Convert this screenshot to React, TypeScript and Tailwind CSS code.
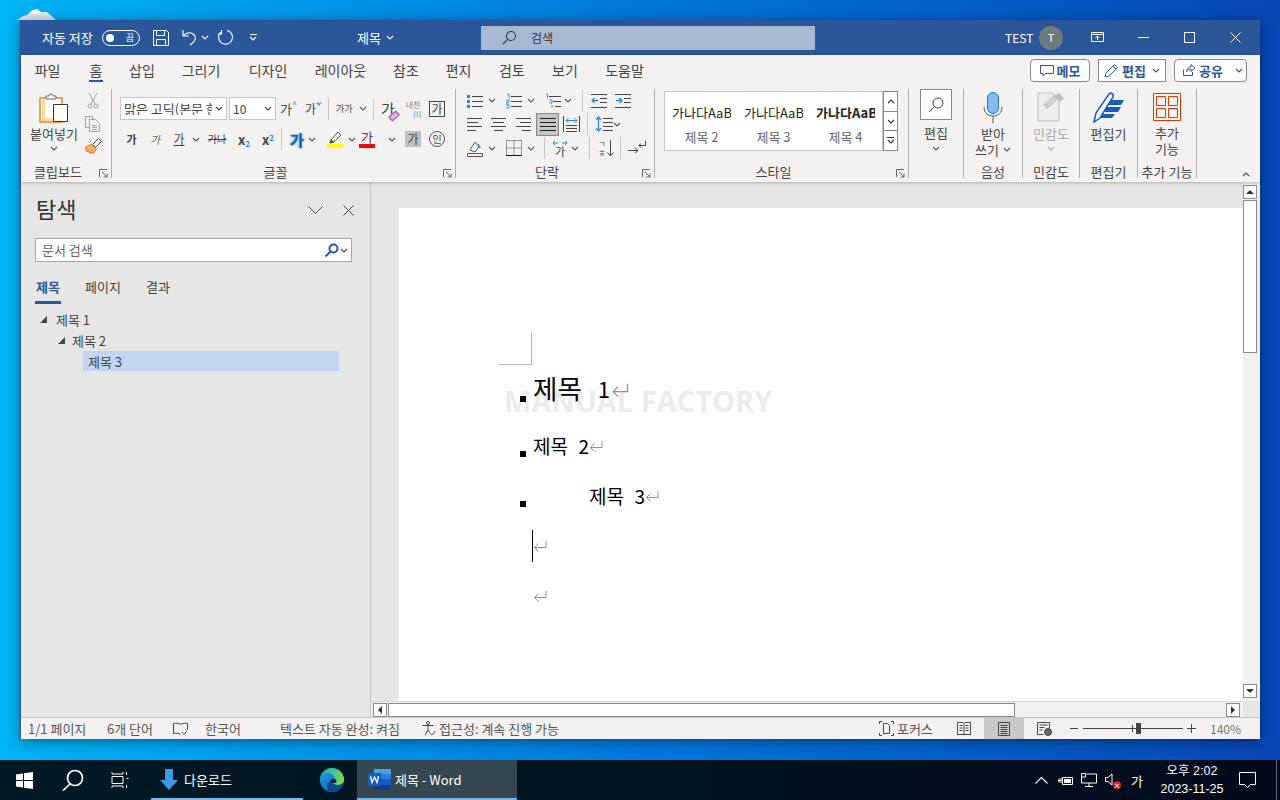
import type { ReactNode } from "react"

function Chev({ className = "", up = false }: { className?: string; up?: boolean }) {
    return (
        <svg width="8" height="5" viewBox="0 0 8 5" className={`shrink-0 ${className}`} fill="none" stroke="currentColor" strokeWidth="1.1">
            <path d={up ? "M1 4l3-3 3 3" : "M1 1l3 3 3-3"} />
        </svg>
    )
}

function ChevCell({ className = "" }: { className?: string }) {
    return (
        <div className={`w-[10px] flex justify-center text-[#555] ${className}`}>
            <Chev />
        </div>
    )
}

function Lines({ className = "", d }: { className?: string; d: string }) {
    return (
        <svg width="16" height="16" viewBox="0 0 16 16" className={`shrink-0 ${className}`} fill="none" stroke="#444" strokeWidth="1">
            <path d={d} />
        </svg>
    )
}

function Launcher() {
    return (
        <svg width="9" height="9" viewBox="0 0 9 9" fill="none" stroke="#666" strokeWidth="1">
            <path d="M.5 8V.5H8M3 3l5 5M8 4.5V8H4.5" />
        </svg>
    )
}

function Group({ width, label, launcher, children }: { width: string; label: string; launcher?: boolean; children: ReactNode }) {
    return (
        <div className={`${width} shrink-0 h-[89px] border-r border-[#b0aeac] flex flex-col`}>
            <div className="h-[76px] shrink-0">{children}</div>
            <div className={`relative h-[13px] flex items-center justify-center text-[13px] leading-none text-[#444] whitespace-nowrap ${launcher ? "pr-[16px]" : ""}`}>
                {label}
                {launcher && (
                    <div className="absolute right-[3px] bottom-0">
                        <Launcher />
                    </div>
                )}
            </div>
        </div>
    )
}

function Sep({ className = "", h = "h-[22px]" }: { className?: string; h?: string }) {
    return <div className={`w-px shrink-0 bg-[#c8c6c4] ${h} ${className}`} />
}

function TitleBar() {
    return (
        <div className="h-[35px] shrink-0 bg-[#2b579a] text-white flex items-center pl-[21px] relative">
            <div className="w-[52px] text-[13px] leading-none whitespace-nowrap">자동 저장</div>
            <div className="ml-[8px] w-[38px] h-[16px] rounded-full border border-white flex items-center justify-between pl-[3px] pr-[5px]">
                <div className="w-[8px] h-[8px] rounded-full bg-white" />
                <span className="text-[9px] leading-none">끔</span>
            </div>
            <svg width="16" height="16" viewBox="0 0 16 16" className="ml-[13px]" fill="none" stroke="#fff" strokeWidth="1">
                <path d="M.5.5h13l2 2v13H.5zM3.5.5v5h8v-5M3.5 15.5v-6h9v6" />
            </svg>
            <svg width="16" height="17" viewBox="0 0 16 17" className="ml-[13px]" fill="none" stroke="#fff" strokeWidth="1.1">
                <path d="M1 1v6h6M1 7c3-3 7-4 10-2 4 3 3 7-3 11" />
            </svg>
            <Chev className="ml-[3px] text-white" />
            <svg width="17" height="17" viewBox="0 0 17 17" className="ml-[8px]" fill="none" stroke="#fff" strokeWidth="1.1">
                <path d="M5 2.2a7 7 0 1 0 5-.8M4.5 1v4H1" />
            </svg>
            <div className="ml-[15px] flex flex-col items-center gap-[1px]">
                <div className="w-[7px] h-px bg-white" />
                <Chev className="text-white" />
            </div>
            <div className="ml-[100px] text-[13px] leading-none whitespace-nowrap w-[24px]">제목</div>
            <Chev className="ml-[4px] text-white w-[10px]" />
            <div className="ml-[86px] w-[334px] h-[24px] bg-[#a7b9d2] flex items-center pl-[21px] text-[#333]">
                <svg width="15" height="15" viewBox="0 0 15 15" fill="none" stroke="#2b3a52" strokeWidth="1.1">
                    <circle cx="9" cy="6" r="4.5" />
                    <path d="M5.8 9.2L1 14" />
                </svg>
                <span className="ml-[14px] text-[12px] leading-none">검색</span>
            </div>
            <div className="ml-[190px] w-[25px] text-[12px] leading-none">TEST</div>
            <div className="ml-[9px] w-[24px] h-[24px] rounded-full bg-[#6d7b7b] flex items-center justify-center text-[11px] leading-none">T</div>
            <svg width="14" height="11" viewBox="0 0 14 11" className="ml-[28px]" fill="none" stroke="#fff" strokeWidth="1">
                <path d="M.5.5h12v9H.5zM.5 2.5h12M6.5 8V4M4.5 6l2-2 2 2" />
            </svg>
            <div className="ml-[33px] w-[11px] h-px bg-white" />
            <div className="ml-[35px] w-[11px] h-[11px] border border-white" />
            <svg width="11" height="11" viewBox="0 0 11 11" className="ml-[35px]" stroke="#fff" strokeWidth="1">
                <path d="M.5.5l10 10M10.5.5l-10 10" />
            </svg>
        </div>
    )
}

const tabs = [
    { name: "파일", w: "w-[25px]", ml: "ml-[14px]" },
    { name: "홈", w: "w-[14px]", ml: "ml-[29px]", active: true },
    { name: "삽입", w: "w-[26px]", ml: "ml-[26px]" },
    { name: "그리기", w: "w-[38px]", ml: "ml-[27px]" },
    { name: "디자인", w: "w-[38px]", ml: "ml-[29px]" },
    { name: "레이아웃", w: "w-[51px]", ml: "ml-[28px]" },
    { name: "참조", w: "w-[26px]", ml: "ml-[27px]" },
    { name: "편지", w: "w-[25px]", ml: "ml-[27px]" },
    { name: "검토", w: "w-[26px]", ml: "ml-[28px]" },
    { name: "보기", w: "w-[26px]", ml: "ml-[27px]" },
    { name: "도움말", w: "w-[39px]", ml: "ml-[27px]" },
]

function TabRow() {
    return (
        <div className="h-[30px] flex items-center text-[14px] text-[#444]">
            {tabs.map((t) => (
                <div key={t.name} className={`${t.w} ${t.ml} relative h-[30px] flex items-center justify-center whitespace-nowrap leading-none`}>
                    {t.name}
                    {t.active && <div className="absolute left-0 right-0 bottom-[3px] h-[2px] bg-[#2b579a]" />}
                </div>
            ))}
            <div className="flex-1" />
            <div className="w-[60px] h-[23px] bg-white border border-[#8a8886] rounded-[4px] flex items-center justify-center gap-[3px] text-[13px] font-bold text-[#2b579a] leading-none">
                <svg width="14" height="13" viewBox="0 0 14 13" fill="none" stroke="#2b579a" strokeWidth="1">
                    <path d="M.5 1.5h13v8H5.5L3 12V9.5H.5z" />
                </svg>
                메모
            </div>
            <div className="ml-[8px] w-[68px] h-[23px] bg-white border border-[#8a8886] flex items-center justify-center gap-[3px] text-[13px] font-bold text-[#2b579a] leading-none">
                <svg width="15" height="15" viewBox="0 0 15 15" fill="none" stroke="#2b579a" strokeWidth="1">
                    <path d="M1 14l1-4L10.500 1.500l3 3L5 13zM9 3l3 3" />
                </svg>
                편집
                <Chev className="ml-[3px]" />
            </div>
            <div className="ml-[8px] mr-[13px] w-[73px] h-[23px] bg-white border border-[#8a8886] rounded-[4px] flex items-center pl-[7px] gap-[3px] text-[13px] font-bold text-[#2b579a] leading-none">
                <svg width="14" height="14" viewBox="0 0 14 14" fill="none" stroke="#2b579a" strokeWidth="1">
                    <path d="M1.500 6.500v6h9V9M4.500 8.500C5 5 7 4 9 4V1.500l4 3.500-4 3.500V6C7 6 5.500 7 4.500 8.500z" />
                </svg>
                공유
                <Chev className="ml-[9px]" />
            </div>
        </div>
    )
}

function Clipboard() {
    return (
        <Group width="w-[91px]" label="클립보드" launcher>
            <div className="flex">
                <div className="w-[66px] flex flex-col items-center">
                    <svg width="30" height="30" viewBox="0 0 30 30" className="mt-[4px]" fill="none">
                        <path d="M1 5h22v24H1z" fill="#fff" stroke="#e58a1f" strokeWidth="1.500" />
                        <path d="M3 7h3v20H3zM3 25h18v3H3z" fill="#fbd9a6" />
                        <path d="M7 6V3h3a2 2 0 0 1 4 0h3v3z" fill="#fff" stroke="#666" />
                        <path d="M14.500 11.500h14v17h-14z" fill="#fff" stroke="#333" />
                    </svg>
                    <div className="mt-[4px] text-[13px] leading-none text-[#444] whitespace-nowrap">붙여넣기</div>
                    <Chev className="mt-[6px] text-[#555]" />
                </div>
                <div className="w-[12px] flex flex-col items-center">
                    <svg width="12" height="17" viewBox="0 0 12 17" className="mt-[3px] shrink-0" fill="none" stroke="#a5a5a5">
                        <path d="M2 1l6 11M10 1L4 12" />
                        <circle cx="3" cy="14" r="2" />
                        <circle cx="9" cy="14" r="2" />
                    </svg>
                    <svg width="16" height="16" viewBox="0 0 16 16" className="mt-[7px] shrink-0" fill="none" stroke="#a5a5a5">
                        <path d="M.5.500h7v11h-7z" />
                        <path d="M4.500 3.500h6l4 4v8h-10z" fill="#f3f2f1" />
                        <path d="M7 9.500h5M7 11.500h5M7 13.500h5" />
                    </svg>
                    <svg width="17" height="16" viewBox="0 0 17 16" className="mt-[6px] shrink-0">
                        <path d="M.5 9l6-3 5 5-3 4.500-2.500-1.500-1 1.500-1.500-2.500-2 .5z" fill="#f9b16b" stroke="#d97a1c" />
                        <path d="M7.500 6.500l6-6 3 3-6 6z" fill="#fff" stroke="#444" />
                    </svg>
                </div>
            </div>
        </Group>
    )
}

function FontGroup() {
    return (
        <Group width="w-[344px]" label="글꼴" launcher>
            <div className="pl-[8px] pt-[8px] text-[#444]">
                <div className="flex items-center h-[23px]">
                    <div className="w-[107px] h-[23px] bg-white border border-[#c8c6c4] flex items-center pl-[3px] pr-[3px] text-[13px] leading-none">
                        <span className="w-[89px] overflow-hidden whitespace-nowrap">맑은 고딕(본문 한글)</span>
                        <Chev className="ml-[3px]" />
                    </div>
                    <div className="ml-[2px] w-[47px] h-[23px] bg-white border border-[#c8c6c4] flex items-center justify-between pl-[3px] pr-[3px] text-[12px] leading-none">
                        10
                        <Chev />
                    </div>
                    <div className="ml-[4px] w-[16px] flex items-start text-[13px] leading-none">
                        가<span className="text-[9px] text-[#2b88d8] -mt-[2px]">^</span>
                    </div>
                    <div className="ml-[9px] w-[16px] flex items-start text-[12px] leading-none">
                        가<span className="text-[9px] text-[#2b88d8] font-bold -mt-[1px]">ˇ</span>
                    </div>
                    <Sep className="ml-[7px]" />
                    <div className="ml-[7px] w-[23px] text-[9px] leading-none whitespace-nowrap">가가</div>
                    <Chev className="text-[#555]" />
                    <Sep className="ml-[6px]" />
                    <div className="ml-[7px] w-[16px] relative text-[15px] leading-none">
                        가
                        <div className="absolute right-[-2px] bottom-[-3px] w-[10px] h-[6px] rotate-[-40deg] bg-[#d9b8e8] border border-[#9b4fb8]" />
                    </div>
                    <div className="ml-[8px] w-[16px] flex flex-col items-center text-[8px] leading-[9px] text-[#888] whitespace-nowrap">
                        내천
                        <span className="text-[#2b88d8] self-end">川</span>
                    </div>
                    <div className="ml-[8px] w-[16px] h-[16px] border border-[#444] flex items-center justify-center text-[12px] leading-none">가</div>
                </div>
                <div className="mt-[9px] flex items-center h-[20px] text-[11px] leading-none">
                    <div className="w-[23px] text-center font-bold">가</div>
                    <div className="w-[24px] text-center italic text-[#666]">가</div>
                    <div className="w-[24px] text-center underline text-[12px]">가</div>
                    <ChevCell />
                    <div className="w-[32px] text-center text-[10px] line-through">가나</div>
                    <div className="w-[22px] text-center font-bold text-[13px]">
                        x<sub className="text-[8px] text-[#2b88d8] leading-none">2</sub>
                    </div>
                    <div className="w-[26px] text-center font-bold text-[13px]">
                        x<sup className="text-[8px] text-[#2b88d8] leading-none">2</sup>
                    </div>
                    <Sep />
                    <div className="ml-[3px] w-[24px] text-center text-[15px] font-bold text-[#1a5fa8] [text-shadow:0_0_2px_#4aa5e8,0_0_2px_#4aa5e8]">가</div>
                    <ChevCell className="-ml-[2px]" />
                    <div className="ml-[10px] w-[16px] flex flex-col items-center">
                        <svg width="14" height="13" viewBox="0 0 14 13" fill="none" stroke="#555">
                            <path d="M2 12l1-3 7-8 3 3-7 7z" />
                            <path d="M2 12l1-3 3 2z" fill="#555" />
                        </svg>
                        <div className="w-[16px] h-[4px] bg-[#ffff00]" />
                    </div>
                    <ChevCell className="ml-[4px]" />
                    <div className="ml-[2px] w-[16px] flex flex-col items-center text-[13px] leading-[14px]">
                        가
                        <div className="w-[16px] h-[4px] bg-[#ff0000]" />
                    </div>
                    <ChevCell className="ml-[12px]" />
                    <div className="ml-[8px] w-[16px] h-[16px] bg-[#c0c0c0] flex items-center justify-center text-[12px]">가</div>
                    <div className="ml-[8px] w-[16px] h-[16px] rounded-full border border-[#555] flex items-center justify-center text-[10px]">인</div>
                </div>
            </div>
        </Group>
    )
}

function Paragraph() {
    const blue = "#2b88d8"
    return (
        <Group width="w-[199px]" label="단락" launcher>
            <div className="flex flex-col">
                <div className="flex items-center h-[23px] pl-[11px]">
                    <svg width="16" height="16" viewBox="0 0 16 16" fill="none" stroke="#444">
                        <path d="M5 3.500h11M5 8.500h11M5 13.500h11" />
                        <path d="M0 2h3v3H0zM0 7h3v3H0zM0 12h3v3H0z" fill={blue} stroke="none" />
                    </svg>
                    <ChevCell className="ml-[4px]" />
                    <svg width="16" height="16" viewBox="0 0 16 16" className="ml-[9px]" fill="none" stroke="#444">
                        <path d="M5 3.500h11M5 8.500h11M5 13.500h11" />
                        <path d="M1 1h2v4M0 7h3v2H0v2h3M0 12h3v3H0" stroke={blue} strokeWidth=".9" />
                    </svg>
                    <ChevCell className="ml-[4px]" />
                    <svg width="16" height="16" viewBox="0 0 16 16" className="ml-[9px]" fill="none" stroke="#444">
                        <path d="M4 3.500h12M8 8.500h8M10 13.500h6" />
                        <path d="M1 1h1.500v4M4 7h3v3H4M7 12v3" stroke={blue} strokeWidth=".9" />
                    </svg>
                    <ChevCell className="ml-[2px]" />
                    <Sep className="ml-[9px]" />
                    <svg width="16" height="16" viewBox="0 0 16 16" className="ml-[8px]" fill="none" stroke="#444">
                        <path d="M0 1.500h16M9 5.500h7M9 9.500h7M0 14.500h16" />
                        <path d="M7 7.500H1M3.500 5l-2.500 2.500 2.500 2.500" stroke={blue} strokeWidth="1.300" />
                    </svg>
                    <svg width="16" height="16" viewBox="0 0 16 16" className="ml-[8px]" fill="none" stroke="#444">
                        <path d="M0 1.500h16M9 5.500h7M9 9.500h7M0 14.500h16" />
                        <path d="M1 7.500h6M4.500 5l2.500 2.500-2.500 2.500" stroke={blue} strokeWidth="1.300" />
                    </svg>
                </div>
                <div className="flex items-center h-[24px] pl-[11px]">
                    <Lines d="M0 2.500h15M0 6.500h11M0 10.500h15M0 14.500h9" />
                    <Lines className="ml-[8px]" d="M0 2.500h15M2 6.500h11M0 10.500h15M3 14.500h9" />
                    <Lines className="ml-[9px]" d="M0 2.500h15M4 6.500h11M0 10.500h15M6 14.500h9" />
                    <div className="ml-[4px] w-[23px] h-[23px] bg-[#c8c6c4] border border-[#8a8886] flex items-center justify-center">
                        <svg width="16" height="14" viewBox="0 0 16 14" fill="none" stroke="#222">
                            <path d="M0 1.500h16M0 5.500h16M0 9.500h16M0 13.500h16" />
                        </svg>
                    </div>
                    <svg width="17" height="16" viewBox="0 0 17 16" className="ml-[4px]" fill="none" stroke="#444">
                        <path d="M.5 0v16M16.500 0v16M3 9.500h11M3 12.500h11M3 15.500h11" />
                        <path d="M3 4.500h11M5.500 2L3 4.500 5.500 7M11.500 2L14 4.500 11.500 7" stroke={blue} />
                    </svg>
                    <Sep className="ml-[7px]" />
                    <svg width="18" height="16" viewBox="0 0 18 16" className="ml-[7px]" fill="none" stroke="#444">
                        <path d="M8 2.500h10M8 6.500h10M8 10.500h10M8 14.500h10" />
                        <path d="M3.500 1v14M1 4l2.500-3L6 4M1 12l2.500 3L6 12" stroke={blue} strokeWidth="1.200" />
                    </svg>
                    <ChevCell className="-ml-[1px]" />
                </div>
                <div className="flex items-center h-[24px] pl-[11px]">
                    <svg width="16" height="17" viewBox="0 0 16 17" fill="none" stroke="#555">
                        <path d="M3 10l5-8 4 5-4 5z" />
                        <path d="M11 3l3 5h-3z" fill={blue} stroke="none" />
                        <path d="M.5 13.500h15v3H.5z" fill="#f3f2f1" />
                    </svg>
                    <ChevCell className="ml-[4px]" />
                    <svg width="16" height="16" viewBox="0 0 16 16" className="ml-[9px]" fill="none" stroke="#444" strokeDasharray="1 1">
                        <path d="M.5.500h15M.5.500v15M15.500.500v15M.5 8h15M8 .500v15" />
                        <path d="M0 15.500h16" strokeDasharray="none" stroke="#111" />
                    </svg>
                    <ChevCell className="ml-[4px]" />
                    <Sep className="ml-[8px]" />
                    <div className="ml-[7px] w-[16px] flex flex-col items-center text-[11px] leading-[9px] text-[#444]">
                        <svg width="16" height="6" viewBox="0 0 16 6" fill="none" stroke={blue}>
                            <path d="M1 3h5M3 1L1 3l2 2M10 3h5M13 1l2 2-2 2" />
                        </svg>
                        <span className="mt-[1px]">가</span>
                    </div>
                    <ChevCell className="ml-[2px]" />
                    <Sep className="ml-[9px]" />
                    <div className="ml-[7px] w-[10px] flex flex-col items-center text-[8px] leading-[9px] text-[#444]">
                        <span>ㄱ</span>
                        <span>ㅎ</span>
                    </div>
                    <svg width="7" height="17" viewBox="0 0 7 17" fill="none" stroke="#444">
                        <path d="M3.500 0v16M.5 12.500l3 3.500 3-3.500" />
                    </svg>
                    <Sep className="ml-[6px]" />
                    <svg width="18" height="15" viewBox="0 0 18 15" className="ml-[7px]" fill="none" stroke="#444">
                        <path d="M0 9.500h10M7 7l3 2.500L7 12M17.500 0v4.500H11M13 2.500L11 4.500l2 2" />
                    </svg>
                </div>
            </div>
        </Group>
    )
}

function StyleItem({ label, bold = false }: { label: string; bold?: boolean }) {
    return (
        <div className="w-[72px] pl-[7px] flex flex-col">
            <div className={`w-[59px] overflow-hidden whitespace-nowrap text-[13px] leading-none text-[#222] ${bold ? "font-bold" : ""}`}>가나다AaBb</div>
            <div className="w-[59px] mt-[11px] text-center text-[13px] leading-none text-[#666]">{label}</div>
        </div>
    )
}

function Styles() {
    return (
        <Group width="w-[254px]" label="스타일" launcher>
            <div className="flex pl-[9px] pt-[2px]">
                <div className="w-[219px] h-[60px] bg-white border border-[#c8c6c4] flex pt-[14px]">
                    <StyleItem label="제목 2" />
                    <StyleItem label="제목 3" />
                    <StyleItem label="제목 4" bold />
                </div>
                <div className="w-[15px] h-[60px] flex flex-col text-[#333]">
                    <div className="flex-1 bg-white border border-[#8a8886] flex items-center justify-center"><Chev up /></div>
                    <div className="flex-1 bg-white border-x border-[#8a8886] flex items-center justify-center"><Chev /></div>
                    <div className="flex-1 bg-white border border-[#8a8886] flex flex-col items-center justify-center gap-[1px]">
                        <div className="w-[7px] h-px bg-[#333]" />
                        <Chev />
                    </div>
                </div>
            </div>
        </Group>
    )
}

function BigLabel({ children, gray = false }: { children: ReactNode; gray?: boolean }) {
    return <div className={`text-[13px] leading-none whitespace-nowrap ${gray ? "text-[#a8a8a8]" : "text-[#444]"}`}>{children}</div>
}

function RightGroups() {
    return (
        <>
            <Group width="w-[55px]" label="">
                <div className="flex flex-col items-center">
                    <div className="w-[32px] h-[31px] bg-white border border-[#8a8886] flex items-center justify-center">
                        <svg width="16" height="16" viewBox="0 0 16 16" fill="none" stroke="#444">
                            <circle cx="10" cy="6" r="5" />
                            <path d="M6.500 9.500L1 15" />
                        </svg>
                    </div>
                    <div className="mt-[6px]"><BigLabel>편집</BigLabel></div>
                    <Chev className="mt-[7px] text-[#555]" />
                </div>
            </Group>
            <Group width="w-[59px]" label="음성">
                <div className="flex flex-col items-center">
                    <svg width="20" height="31" viewBox="0 0 20 31" className="mt-[3px]" fill="none">
                        <rect x="4.500" y=".5" width="11" height="21" rx="5.500" fill="#84bcec" stroke="#1e78c8" />
                        <path d="M1 15c0 6 4 9 9 9s9-3 9-9M10 24v7" stroke="#555" />
                    </svg>
                    <div className="mt-[4px]"><BigLabel>받아</BigLabel></div>
                    <div className="mt-[3px] flex items-center gap-[4px]">
                        <BigLabel>쓰기</BigLabel>
                        <Chev className="text-[#555]" />
                    </div>
                </div>
            </Group>
            <Group width="w-[57px]" label="민감도">
                <div className="flex flex-col items-center">
                    <svg width="28" height="30" viewBox="0 0 28 30" className="mt-[3px]" fill="none">
                        <path d="M1 1h14l7 6v22H1z" fill="#ececec" stroke="#bdbdbd" />
                        <path d="M6 12l12-10 4 4L10 17z" fill="#c4c4c4" />
                        <path d="M17 4l5-3 5 5-4 4z" fill="#bdbdbd" />
                        <path d="M8 12l8-7M10 14l8-7" stroke="#f3f2f1" />
                    </svg>
                    <div className="mt-[5px]"><BigLabel gray>민감도</BigLabel></div>
                    <Chev className="mt-[6px] text-[#b0b0b0]" />
                </div>
            </Group>
            <Group width="w-[58px]" label="편집기">
                <div className="flex flex-col items-center">
                    <svg width="32" height="31" viewBox="0 0 32 31" className="mt-[3px]">
                        <path d="M1 30l2-9L16 2c2-2 5 0 4 3L7 26z" fill="#fff" stroke="#185abd" strokeWidth="1.500" />
                        <path d="M18 8h13l-3 5H14zM14 15h14l-3 5H10zM10 22h12l-3 4H7z" fill="#185abd" />
                    </svg>
                    <div className="mt-[4px]"><BigLabel>편집기</BigLabel></div>
                </div>
            </Group>
            <Group width="w-[59px]" label="추가 기능">
                <div className="flex flex-col items-center">
                    <svg width="28" height="28" viewBox="0 0 28 28" className="mt-[4px]" fill="none" stroke="#d83b01">
                        <path d="M.5.500h27v27H.5z" />
                        <path d="M3.500 3.500h9v9h-9zM15.500 3.500h9v9h-9zM3.500 15.500h9v9h-9zM15.500 15.500h9v9h-9z" />
                    </svg>
                    <div className="mt-[5px]"><BigLabel>추가</BigLabel></div>
                    <div className="mt-[3px]"><BigLabel>기능</BigLabel></div>
                </div>
            </Group>
        </>
    )
}

function Ribbon() {
    return (
        <div className="h-[127px] shrink-0 bg-[#f3f2f1] relative z-10 shadow-[0_1px_3px_rgba(0,0,0,0.25)]">
            <TabRow />
            <div className="flex pt-[4px]">
                <Clipboard />
                <FontGroup />
                <Paragraph />
                <Styles />
                <RightGroups />
                <div className="flex-1 flex items-end justify-end pr-[9px] pb-[1px] text-[#444]">
                    <Chev up className="w-[10px]" />
                </div>
            </div>
        </div>
    )
}

function NavPane() {
    return (
        <div className="w-[350px] shrink-0 bg-[#e6e6e6] border-r border-[#c6c6c6] flex flex-col text-[#444]">
            <div className="h-[56px] shrink-0 flex items-center pl-[15px]">
                <div className="w-[41px] text-[22px] leading-none text-[#333] whitespace-nowrap -mt-[5px]">탐색</div>
                <svg width="15" height="8" viewBox="0 0 15 8" className="ml-[231px]" fill="none" stroke="#444">
                    <path d="M.5.5L7.500 7.500 14.500.5" />
                </svg>
                <svg width="11" height="11" viewBox="0 0 11 11" className="ml-[20px]" fill="none" stroke="#444">
                    <path d="M.5.5l10 10M10.500.5l-10 10" />
                </svg>
            </div>
            <div className="ml-[14px] w-[317px] h-[24px] bg-white border border-[#a6a6a6] flex items-center pl-[6px] pr-[3px]">
                <span className="text-[13px] leading-none text-[#666] -mt-[2px]">문서 검색</span>
                <div className="flex-1" />
                <svg width="15" height="15" viewBox="0 0 15 15" fill="none" stroke="#2b579a" strokeWidth="2">
                    <circle cx="9.500" cy="5.500" r="4" />
                    <path d="M6.500 8.500L1.500 13.500" />
                </svg>
                <Chev className="ml-[1px] text-[#444]" />
            </div>
            <div className="mt-[16px] ml-[14px] flex text-[13px] leading-none">
                <div className="w-[26px] h-[26px] border-b-[3px] border-[#2b579a] font-bold text-[#2b579a] whitespace-nowrap pt-[2px] pl-px">제목</div>
                <div className="ml-[24px] pt-[2px] whitespace-nowrap w-[36px]">페이지</div>
                <div className="ml-[25px] pt-[2px] whitespace-nowrap">결과</div>
            </div>
            <div className="mt-[5px] flex flex-col text-[13px] leading-none">
                <div className="h-[21px] flex items-center pl-[19px]">
                    <div className="w-0 h-0 border-l-[7px] border-l-transparent border-b-[7px] border-b-[#444]" />
                    <span className="ml-[9px]">제목 1</span>
                </div>
                <div className="h-[21px] flex items-center pl-[37px]">
                    <div className="w-0 h-0 border-l-[7px] border-l-transparent border-b-[7px] border-b-[#444]" />
                    <span className="ml-[7px]">제목 2</span>
                </div>
                <div className="ml-[62px] w-[256px] h-[20px] bg-[#c2d5f2] flex items-center pl-[5px]">제목 3</div>
            </div>
        </div>
    )
}

function Ret({ className = "" }: { className?: string }) {
    return (
        <svg width="14" height="12" viewBox="0 0 14 12" className={`shrink-0 ${className}`} fill="none" stroke="#8f8f8f">
            <path d="M13 0v6.500H1.500M5.500 2.500L1.500 6.500l4 4" />
        </svg>
    )
}

function Bullet({ className }: { className: string }) {
    return <div className={`absolute left-[-13px] w-[6px] h-[6px] bg-black ${className}`} />
}

function Page() {
    return (
        <div className="flex-1 min-w-0 pt-[26px] pl-[28px] overflow-hidden">
            <div className="relative h-full bg-white pt-[124px]">
                <div className="ml-[100px] w-[33px] h-[33px] border-r border-b border-[#b8b8b8]" />
                <div className="relative ml-[134px] text-black leading-none">
                    <div className="absolute left-[-29px] top-[18px] text-[29px] leading-[36px] font-bold text-[#ececec] whitespace-nowrap font-['Open_Sans',sans-serif]">MANUAL FACTORY</div>
                    <div className="relative h-[50px] flex items-center text-[26.500px] pb-[4px]">
                        <Bullet className="top-[31px]" />
                        <span className="relative whitespace-pre">제목  </span>
                        <span className="relative text-[22px] ml-[4px]">1</span>
                        <Ret className="relative ml-[3px] mt-[5px] scale-125" />
                    </div>
                    <div className="relative mt-[7px] h-[50px] flex items-center text-[19px] pb-[4px]">
                        <Bullet className="top-[29px]" />
                        <span className="whitespace-pre">제목  </span>
                        <span className="ml-[2px]">2</span>
                        <Ret className="mt-[3px]" />
                    </div>
                    <div className="relative h-[50px] flex items-center text-[19px] pb-[4px]">
                        <Bullet className="top-[29px]" />
                        <span className="ml-[56px] whitespace-pre">제목  </span>
                        <span className="ml-[2px]">3</span>
                        <Ret className="mt-[3px]" />
                    </div>
                    <div className="relative h-[50px] flex items-center">
                        <div className="absolute left-[-1px] top-[8px] w-px h-[32px] bg-black" />
                        <Ret />
                    </div>
                    <div className="h-[50px] flex items-center">
                        <Ret />
                    </div>
                </div>
            </div>
        </div>
    )
}

function ScrollBtn({ d, className = "" }: { d: string; className?: string }) {
    return (
        <div className={`w-[14px] h-[14px] bg-white border border-[#8a8a8a] flex items-center justify-center shrink-0 ${className}`}>
            <svg width="8" height="8" viewBox="0 0 8 8" fill="#333">
                <path d={d} />
            </svg>
        </div>
    )
}

function DocArea() {
    return (
        <div className="flex-1 min-w-0 bg-[#e6e6e6] flex flex-col">
            <div className="flex-1 min-h-0 flex">
                <Page />
                <div className="w-[17px] shrink-0 bg-[#f0f0f0] flex flex-col pt-[3px] pb-[3px]">
                    <ScrollBtn d="M0 6l4-4 4 4z" />
                    <div className="ml-0 w-[14px] h-[153px] mt-px bg-white border border-[#8a8a8a]" />
                    <div className="flex-1" />
                    <ScrollBtn d="M0 2l4 4 4-4z" />
                </div>
            </div>
            <div className="h-[16px] shrink-0 flex">
                <div className="w-[872px] bg-[#f0f0f0] border-t border-[#d8d8d8] flex items-center pl-[2px] pr-[3px]">
                    <ScrollBtn d="M6 0L2 4l4 4z" />
                    <div className="w-[627px] h-[14px] ml-px bg-white border border-[#8a8a8a]" />
                    <div className="flex-1" />
                    <ScrollBtn d="M2 0l4 4-4 4z" />
                </div>
            </div>
        </div>
    )
}

function StatusBar() {
    return (
        <div className="h-[22px] shrink-0 bg-[#f3f2f1] border-t border-[#c6c6c6] flex items-center text-[13px] leading-none text-[#555] whitespace-nowrap">
            <div className="ml-[7px] w-[59px]">1/1 페이지</div>
            <div className="ml-[20px] w-[47px]">6개 단어</div>
            <svg width="15" height="14" viewBox="0 0 15 14" className="ml-[19px]" fill="none" stroke="#444">
                <path d="M7.500 2.500C6 1 3 1 .5 1.500v10c2.500-.5 5.500-.5 7 1M7.500 2.500C9 1 12 1 14.500 1.500v6M9 10l2 2.500 3-4" />
            </svg>
            <div className="ml-[17px] w-[36px]">한국어</div>
            <div className="ml-[39px] w-[122px]">텍스트 자동 완성: 켜짐</div>
            <svg width="14" height="15" viewBox="0 0 14 15" className="ml-[20px]" fill="none" stroke="#444">
                <circle cx="6" cy="2" r="1.500" />
                <path d="M.5 4.500h11M6 4v5l-3 5M6 9l2 3M8.500 12.500l1.500 1.500 3.500-4" />
            </svg>
            <div className="ml-[3px] w-[123px]">접근성: 계속 진행 가능</div>
            <div className="flex-1" />
            <svg width="15" height="15" viewBox="0 0 15 15" fill="none" stroke="#444">
                <path d="M.5 3V.5H3M12 .5h2.500V3M.5 12v2.500H3M12 14.500h2.500V12M4.500 2.500h4l2 2v8h-6z" />
            </svg>
            <div className="ml-[3px] w-[36px]">포커스</div>
            <svg width="14" height="13" viewBox="0 0 14 13" className="ml-[24px]" fill="none" stroke="#444">
                <path d="M.5.5h5.500l1 1 1-1h5.500v12H.5zM7 1.500v11M2.500 3.500h3M2.500 6h3M2.500 8.500h3M8.500 3.500h3M8.500 6h3M8.500 8.500h3" />
            </svg>
            <div className="ml-[13px] w-[40px] h-[21px] bg-[#c8c8c8] flex items-center justify-center">
                <svg width="12" height="14" viewBox="0 0 12 14" fill="none" stroke="#444">
                    <path d="M.5.5h11v13H.5zM2.500 3.500h7M2.500 5.500h7M2.500 7.500h7M2.500 9.500h7M2.500 11.500h7" />
                </svg>
            </div>
            <svg width="15" height="14" viewBox="0 0 15 14" className="ml-[13px]" fill="none" stroke="#444">
                <path d="M.5.5h12v6M.5.5v12h6M2.500 3h8M2.500 5.500h5M2.500 8h3" />
                <circle cx="11" cy="10" r="3.500" fill="#666" />
            </svg>
            <div className="ml-[18px] w-[8px] h-px bg-[#444]" />
            <div className="ml-[5px] w-[100px] h-px bg-[#444] relative">
                <div className="absolute left-[49px] top-[-3px] w-px h-[7px] bg-[#444]" />
                <div className="absolute left-[53px] top-[-5px] w-[5px] h-[11px] bg-[#444]" />
            </div>
            <svg width="9" height="9" viewBox="0 0 9 9" className="ml-[4px]" stroke="#444">
                <path d="M0 4.500h9M4.500 0v9" />
            </svg>
            <div className="ml-[14px] w-[32px] mr-[18px] text-[12px] text-[#777]">140%</div>
        </div>
    )
}

function WordWindow() {
    return (
        <div className="absolute left-[20px] top-[20px] w-[1240px] h-[719px] flex flex-col border-l border-[#2b579a] shadow-[0_2px_12px_rgba(0,0,0,0.45)]">
            <TitleBar />
            <Ribbon />
            <div className="flex-1 min-h-0 flex">
                <NavPane />
                <DocArea />
            </div>
            <StatusBar />
        </div>
    )
}

function Taskbar() {
    return (
        <div className="absolute left-0 right-0 bottom-0 h-[40px] bg-gradient-to-r from-[#001a26] via-[#00141f] to-[#020a1c] flex items-center text-white">
            <svg width="17" height="17" viewBox="0 0 17 17" className="ml-[16px]" fill="#fff">
                <path d="M0 2.500l7-1v6.500H0zM8 1.300L17 0v8H8zM0 9h7v6.500l-7-1zM8 9h9v8l-9-1.300z" />
            </svg>
            <svg width="22" height="22" viewBox="0 0 22 22" className="ml-[29px]" fill="none" stroke="#fff" strokeWidth="1.700">
                <circle cx="13" cy="9" r="7.500" />
                <path d="M8 15l-7 6.500" />
            </svg>
            <svg width="18" height="16" viewBox="0 0 18 16" className="ml-[27px]" fill="none" stroke="#fff">
                <path d="M1 0v2h11V0M1 4.500h11v7H1zM1 16v-2h11v2M15.500 0v3M15.500 6.500h2M15.500 13v3" />
            </svg>
            <div className="ml-[22px] w-[152px] h-[40px] border-b-[2px] border-[#76b9ed] flex items-center pl-[9px]">
                <svg width="18" height="21" viewBox="0 0 18 21" fill="#3e9ae8">
                    <path d="M5 0h8v11h5l-9 10-9-10h5z" />
                </svg>
                <span className="ml-[6px] text-[13px] leading-none">다운로드</span>
            </div>
            <svg width="24" height="24" viewBox="0 0 24 24" className="ml-[17px]">
                <defs>
                    <linearGradient id="edgeA" x1="0" y1="0" x2="0.6" y2="1">
                        <stop offset="0" stopColor="#1f9fe0" />
                        <stop offset="1" stopColor="#0f6fc0" />
                    </linearGradient>
                    <linearGradient id="edgeB" x1="0" y1="0.3" x2="1" y2="0.6">
                        <stop offset="0" stopColor="#1fa8c8" />
                        <stop offset="1" stopColor="#7bdc4e" />
                    </linearGradient>
                </defs>
                <circle cx="12" cy="12" r="12" fill="url(#edgeA)" />
                <path d="M12 0a12 12 0 0 1 12 12c0 3-3 5-6 5-3 0-5-1-5-2 1-1 2-2 2-4 0-3-3-6-7-6-3 0-6 2-8 5C1 5 6 0 12 0z" fill="url(#edgeB)" />
                <path d="M13 12c-1 3 1 5 5 5 2 0 4-1 6-3-1 6-6 10-12 10-3 0-5-3-5-6 0-3 3-6 6-6z" fill="#0b4a8f" />
                <ellipse cx="13.500" cy="13" rx="3" ry="2" fill="#00253d" />
            </svg>
            <div className="ml-[13px] w-[160px] h-[40px] bg-[#37474f] border-b-[2px] border-[#76b9ed] flex items-center pl-[11px]">
                <svg width="23" height="21" viewBox="0 0 23 21">
                    <path d="M6 0h17v5H6z" fill="#41a5ee" />
                    <path d="M6 5h17v5.500H6z" fill="#2b7cd3" />
                    <path d="M6 10.500h17V16H6z" fill="#185abd" />
                    <path d="M6 16h17v5H6z" fill="#103f91" />
                    <path d="M0 4h13v13H0z" fill="#185abd" />
                    <path d="M2.500 7l1.500 6.500L6.500 8 9 13.500 10.500 7" fill="none" stroke="#fff" strokeWidth="1.300" />
                </svg>
                <span className="ml-[4px] text-[13px] leading-none whitespace-nowrap">제목 - Word</span>
            </div>
            <div className="flex-1" />
            <svg width="13" height="7" viewBox="0 0 13 7" fill="none" stroke="#fff" strokeWidth="1.100">
                <path d="M.5 6.500l6-6 6 6" />
            </svg>
            <svg width="16" height="11" viewBox="0 0 16 11" className="ml-[10px]" fill="none" stroke="#fff">
                <path d="M4.500 2.500h10v7h-10zM0 5.500h3M1 3.500v4M3 3v5" />
                <path d="M6 4h7v4H6z" fill="#fff" stroke="none" />
            </svg>
            <svg width="16" height="14" viewBox="0 0 16 14" className="ml-[7px]" fill="none" stroke="#fff">
                <path d="M5.500 1h10v9H.5V1M8 10v3M4 13.500h8M.5.500h4v3.500h-4z" />
            </svg>
            <div className="ml-[8px] relative w-[16px] h-[14px]">
                <svg width="9" height="13" viewBox="0 0 9 13" fill="none" stroke="#fff">
                    <path d="M.5 4.500h2.500l4-3.500v11l-4-3.500H.5z" />
                </svg>
                <div className="absolute right-0 bottom-[-2px] w-[8px] h-[8px] rounded-full bg-[#e81123] text-[7px] leading-[8px] text-center font-bold">×</div>
            </div>
            <div className="ml-[10px] w-[12px] text-[13px] leading-none">가</div>
            <div className="ml-[19px] w-[60px] flex flex-col items-center text-[12.500px] leading-none whitespace-nowrap gap-[6px] font-['Liberation_Sans','Noto_Sans_CJK_KR',sans-serif]">
                <span>오후 2:02</span>
                <span>2023-11-25</span>
            </div>
            <svg width="17" height="16" viewBox="0 0 17 16" className="ml-[17px]" fill="none" stroke="#fff">
                <path d="M.5.5h16v12h-5l-3 3-3-3h-5z" />
            </svg>
            <div className="ml-[20px] mr-[3px] w-px h-[40px] bg-[#5a6670]" />
        </div>
    )
}

export default function App() {
    return (
        <div className="relative w-[1280px] h-[800px] overflow-hidden bg-gradient-to-br from-[#00a4ef] via-[#0078d7] to-[#0a3fb0] font-['Noto_Sans_CJK_KR','Noto_Sans',sans-serif]">
            <div className="absolute left-0 top-0 w-[1280px] h-[760px] bg-gradient-to-r from-[#00b4f5] via-[#0078dc] to-[#0847b4]" />
            <svg width="40" height="12" viewBox="0 0 40 12" className="absolute left-[17px] top-[9px]">
                <path d="M0 11l6-4 4-1 4-4 6-2 4 3 6 0 9 8z" fill="#dfe9f0" />
                <path d="M14 2l6-2 4 3-3 2-5 0z" fill="#fff" />
            </svg>
            <WordWindow />
            <Taskbar />
        </div>
    )
}
